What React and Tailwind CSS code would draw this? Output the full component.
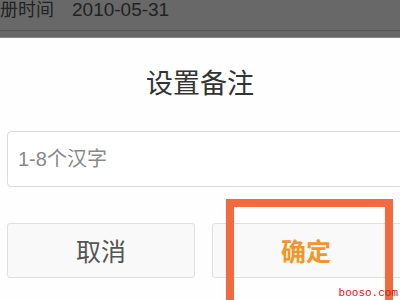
export default function App() {
  return (
    <div
      className="relative w-[400px] h-[300px] overflow-hidden bg-[#fefefe]"
      style={{ fontFamily: '"Liberation Sans", "Noto Sans CJK SC", sans-serif' }}
    >
      <div className="h-[38px] bg-[#686868] flex flex-col">
        <div className="h-[31px] border-b border-[#555] flex items-start">
          <div className="flex items-center h-[20px] text-[18px] leading-[20px] text-[#222]">
            <span>册时间</span>
            <span className="ml-[18px] text-[19px] leading-[20px]">2010-05-31</span>
          </div>
        </div>
        <div className="flex-1 border-b border-[#8a8a8a]"></div>
      </div>
      <div className="rounded-tl-[4px] bg-[#fefefe] flex flex-col">
        <div className="h-[93px] flex items-center justify-center pb-[1px]">
          <span className="text-[27px] leading-none text-[#333]">设置备注</span>
        </div>
        <div className="ml-[7px] w-[400px] shrink-0 h-[56px] border border-[#dcdcdc] rounded-[4px] bg-white flex items-center pl-[10px]">
          <span className="text-[20px] text-[#888]">1-8个汉字</span>
        </div>
        <div className="mt-[36px] ml-[7px] flex gap-[17px]">
          <div className="w-[188px] shrink-0 h-[55px] border border-[#e0e0e0] rounded-[3px] bg-[#f9f9f9] flex items-center justify-center pt-[4px]">
            <span className="text-[25px] text-[#555]">取消</span>
          </div>
          <div className="w-[200px] shrink-0 h-[55px] border border-[#e0e0e0] rounded-[3px] bg-[#f9f9f9] flex items-center justify-center pr-[12px] pt-[4px]">
            <span className="text-[25px] font-bold text-[#f0962a]">确定</span>
          </div>
        </div>
      </div>
      <div className="absolute left-[226px] top-[199px] w-[167px] h-[120px] border-[8px] border-[#f26a3e]"></div>
      <div
        className="absolute right-[2px] bottom-[1px] text-[11px] leading-none text-[#e01010]"
        style={{ fontFamily: '"Liberation Mono", monospace' }}
      >
        booso.com
      </div>
    </div>
  );
}
